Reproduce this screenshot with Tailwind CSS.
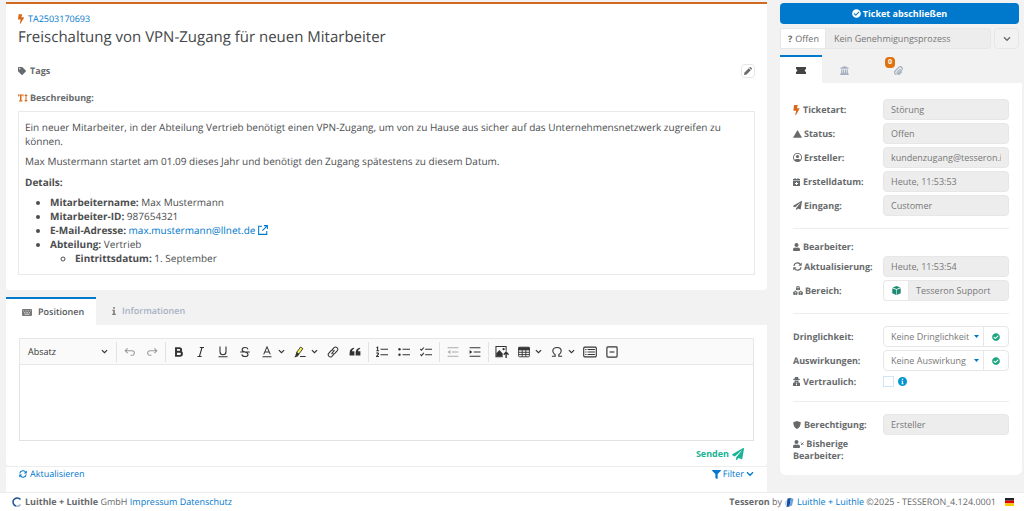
<!DOCTYPE html>
<html lang="de">
<head>
    <meta charset="UTF-8">
    <title>TA2503170693</title>
    <meta name="viewport" content="width=device-width, initial-scale=1.0">
    <script src="https://cdn.jsdelivr.net/npm/@tailwindcss/browser@4"></script>
</head>
<body class="bg-[#f2f2f2] font-['Open_Sans',sans-serif] [text-rendering:geometricPrecision] text-[9px] leading-3 text-[#676a6c] min-h-screen flex flex-col">

    <!-- Icons -->
    <svg class="hidden">
        <symbol id="bolt" viewBox="0 0 320 512"><path d="M296 160H180.6l42.6-129.8C227.2 15 215.7 0 200 0H56C44 0 33.8 8.9 32.2 20.8l-32 240C-1.7 275.2 9.5 288 24 288h118.7L96.6 482.5c-3.6 15.2 8 29.5 23.3 29.5 8.4 0 16.4-4.4 20.8-12l176-304c9.3-15.9-2.2-36-20.7-36z"/></symbol>
        <symbol id="check" viewBox="0 0 512 512"><path d="M504 256c0 136.967-111.033 248-248 248S8 392.967 8 256 119.033 8 256 8s248 111.033 248 248zM227.314 387.314l184-184c6.248-6.248 6.248-16.379 0-22.627l-22.627-22.627c-6.248-6.249-16.379-6.249-22.628 0L216 308.118l-70.059-70.059c-6.248-6.248-16.379-6.248-22.628 0l-22.627 22.627c-6.248 6.248-6.248 16.379 0 22.627l104 104c6.249 6.249 16.379 6.249 22.628.001z"/></symbol>
        <symbol id="tag" viewBox="0 0 512 512"><path d="M0 252.118V48C0 21.49 21.49 0 48 0h204.118a48 48 0 0 1 33.941 14.059l211.882 211.882c18.745 18.745 18.745 49.137 0 67.882L293.823 497.941c-18.745 18.745-49.137 18.745-67.882 0L14.059 286.059A48 48 0 0 1 0 252.118zM112 64c-26.51 0-48 21.49-48 48s21.49 48 48 48 48-21.49 48-48-21.49-48-48-48z"/></symbol>
        <symbol id="user" viewBox="0 0 448 512"><path d="M224 256c70.7 0 128-57.3 128-128S294.7 0 224 0 96 57.3 96 128s57.3 128 128 128zm89.6 32h-16.7c-22.2 10.2-46.9 16-72.9 16s-50.6-5.8-72.9-16h-16.7C60.2 288 0 348.2 0 422.4V464c0 26.5 21.5 48 48 48h352c26.5 0 48-21.5 48-48v-41.6c0-74.2-60.2-134.4-134.4-134.4z"/></symbol>
        <symbol id="plane" viewBox="0 0 512 512"><path d="M476 3.2L12.5 270.6c-18.1 10.4-15.8 35.6 2.2 43.2L121 358.4l287.3-253.2c5.5-4.9 13.3 2.6 8.6 8.3L176 407v80.5c0 23.6 28.5 32.9 42.5 15.8L282 426l124.6 52.2c14.2 6 30.4-2.9 33-18.2l72-432C515 7.8 493.3-6.8 476 3.2z"/></symbol>
        <symbol id="filter" viewBox="0 0 512 512"><path d="M487.976 0H24.028C2.71 0-8.047 25.866 7.058 40.971L192 225.941V432c0 7.831 3.821 15.17 10.237 19.662l80 55.98C298.02 518.69 320 507.493 320 487.98V225.941l184.947-184.97C520.021 25.896 509.338 0 487.976 0z"/></symbol>
        <symbol id="sync" viewBox="0 0 16 16"><g fill="none" stroke="currentColor" stroke-width="2.2"><path d="M1.6 7A6.4 6.4 0 0 1 13.5 4.8"/><path d="M14.4 9A6.4 6.4 0 0 1 2.5 11.2"/></g><path d="M15.5 0.8v6H9.6zM.5 15.2v-6h5.9z"/></symbol>
        <symbol id="bank" viewBox="0 0 16 16"><path d="M8 0l7.5 3.6V5H.5V3.6zM2 6h2.2v6H2zm3.3 0h2v6h-2zm3.4 0h2v6h-2zm3.1 0H14v6h-2.2zM1.3 12h13.4v2H1.3zM.3 14.200h15.400V16H.3z"/></symbol>
        <symbol id="caret" viewBox="0 0 12 8"><path d="M1.5 1.5L6 6l4.5-4.5" fill="none" stroke="currentColor" stroke-width="2"/></symbol>
        <symbol id="pencil" viewBox="0 0 16 16"><path d="M0 16l1-5L9.6 2.4l4 4L5 15zM10.6 1.5L12 .2c.5-.4 1-.2 1.4.1l2.3 2.3c.4.4.5 1 .1 1.4l-1.300 1.400z"/></symbol>
        <symbol id="cube" viewBox="0 0 16 16"><path d="M8 0l6.800 2.500L8 5.200 1.200 2.500zM.5 3.800l7 2.800V16L.5 13zM15.500 3.800l-7 2.800V16l7-3z"/></symbol>
    </svg>

    <main class="flex gap-[13px] pl-1.5 pr-0.5">

        <!-- Ticket -->
        <div class="flex-1 min-w-0 pt-0.5">
            <section class="bg-white border-t-2 border-[#d2691e] rounded-b px-3 pt-[9px] pb-[15px]">
                <a href="#" class="flex items-center gap-1 text-[#0078cc]">
                    <svg class="w-1.5 h-2.5 fill-[#d9691a]"><use href="#bolt"/></svg>TA2503170693
                </a>
                <h1 class="text-[15px] leading-6 text-[#444648]">Freischaltung von VPN-Zugang für neuen Mitarbeiter</h1>
                <div class="flex items-center justify-between mt-[15px] h-[14px]">
                    <span class="flex items-center gap-1 font-bold"><svg class="size-2 fill-current"><use href="#tag"/></svg>Tags</span>
                    <button aria-label="Tags bearbeiten" class="flex items-center justify-center size-[14px] border border-[#e7e7e7] rounded-sm"><svg class="size-2 fill-current"><use href="#pencil"/></svg></button>
                </div>
                <h2 class="flex items-center gap-0.5 mt-3.5 font-bold">
                    <svg class="w-2.5 h-2 fill-[#d9691a]" viewBox="0 0 20 16"><path d="M0 1h11v4H9.500V3H7v10h2v2H2v-2h2V3H1.500v2H0zM16 0l3.500 4H17v8h2.500L16 16l-3.500-4H15V4h-2.500z"/></svg>Beschreibung:
                </h2>
                <div class="border border-[#e9e9e9] mt-[7px] px-1.5 pt-2 pb-[9px] text-[10px] leading-[14px] text-[#4c4e50]">
                    <p>Ein neuer Mitarbeiter, in der Abteilung Vertrieb benötigt einen VPN-Zugang, um von zu Hause aus sicher auf das Unternehmensnetzwerk zugreifen zu können.</p>
                    <p class="mt-1.5">Max Mustermann startet am 01.09 dieses Jahr und benötigt den Zugang spätestens zu diesem Datum.</p>
                    <p class="mt-[7px]"><b>Details:</b></p>
                    <ul class="list-disc mt-1.5 pl-[25px]">
                        <li><b>Mitarbeitername:</b> Max Mustermann</li>
                        <li><b>Mitarbeiter-ID:</b> 987654321</li>
                        <li><b>E-Mail-Adresse:</b> <a href="#" class="text-[#0078cc]">max.mustermann@llnet.de <svg class="inline size-2.5 align-[-1px]" viewBox="0 0 16 16" fill="none" stroke="currentColor" stroke-width="1.700"><path d="M6.500 2H1v13h13V9.500M9.500 1H15v5.500M15 1L7 9"/></svg></a></li>
                        <li><b>Abteilung:</b> Vertrieb
                            <ul class="list-[circle] pl-[25px]">
                                <li><b>Eintrittsdatum:</b> 1. September</li>
                            </ul>
                        </li>
                    </ul>
                </div>
            </section>

            <nav class="flex mt-[7px] h-7">
                <a href="#" class="flex items-center gap-1.5 bg-white border-t-2 border-[#0078cc] pl-4 pr-3 font-semibold text-[#55585a]">
                    <svg class="w-2.5 h-[7px] fill-[#777]" viewBox="0 0 20 14"><path fill-rule="evenodd" d="M1.500 0h17L20 1.500v11L18.500 14h-17L0 12.500v-11zM2.500 3v1.500H4V3zm3.300 0v1.500h1.500V3zm3.400 0v1.500h1.500V3zm3.300 0v1.500H14V3zm3.500 0v1.500h1.500V3zm-12 3v1.500h1.500V6zm3.400 0v1.500h1.500V6zm3.300 0v1.500h1.500V6zm3.300 0v1.500h1.500V6zM5 9.500V11h10V9.500z"/></svg>Positionen
                </a>
                <a href="#" class="flex items-center gap-1.5 px-4 font-semibold text-[#a7b1c2]">
                    <svg class="w-1 h-2 fill-[#777]" viewBox="0 0 8 16"><path d="M2.500 0h3v3.500h-3zM.8 5.500h4.700v8H7.500V16H.5v-2.500h2V8H.8z"/></svg>Informationen
                </a>
            </nav>
            <section class="bg-white border-b border-[#ededed] rounded-b px-[13px] pt-[13px] pb-1.5">
                <div class="flex items-center h-[27px] bg-[#fafafa] border border-[#e7e7e7] text-[#333] overflow-hidden">
                    <button class="flex items-center justify-between w-[96px] pl-2 pr-2">Absatz<svg class="w-[7px] h-[5px]"><use href="#caret"/></svg></button>
                    <span class="w-px h-5 bg-[#e2e2e2] mr-0.5"></span>
                    <button aria-label="Rückgängig" class="w-[22px] flex justify-center text-[#999]"><svg class="size-3" viewBox="0 0 20 20" fill="none" stroke="currentColor" stroke-width="1.800"><path d="M6 4L2 8l4 4M2 8h11.500a3.700 3.700 0 0 1 0 7.500H11"/></svg></button>
                    <button aria-label="Wiederherstellen" class="w-[22px] flex justify-center text-[#999]"><svg class="size-3" viewBox="0 0 20 20" fill="none" stroke="currentColor" stroke-width="1.800"><path d="M14 4l4 4-4 4M18 8H6.500a3.700 3.700 0 0 0 0 7.500H9"/></svg></button>
                    <span class="w-px h-5 bg-[#e2e2e2] mx-0.5"></span>
                    <button aria-label="Fett" class="w-[22px] flex justify-center"><svg class="size-3" viewBox="0 0 20 20" fill="none" stroke="currentColor" stroke-width="3.200"><path d="M5 3.500h5.500a3 3 0 0 1 0 6.200H5zM5 9.700h6.500a3.400 3.400 0 0 1 0 6.800H5z"/></svg></button>
                    <button aria-label="Kursiv" class="w-[22px] flex justify-center"><svg class="size-3" viewBox="0 0 20 20" fill="none" stroke="currentColor" stroke-width="1.800"><path d="M8 2.500h7M4 17.500h7M11.700 2.500L7.300 17.500"/></svg></button>
                    <button aria-label="Unterstrichen" class="w-[22px] flex justify-center"><svg class="size-3" viewBox="0 0 20 20" fill="none" stroke="currentColor" stroke-width="1.800"><path d="M5 1v8.500a5 5 0 0 0 10 0V1M2.500 18h15"/></svg></button>
                    <button aria-label="Durchgestrichen" class="w-[22px] flex justify-center"><svg class="size-3" viewBox="0 0 20 20" fill="none" stroke="currentColor" stroke-width="1.800"><path d="M15 5.500C14.500 3.500 12.500 2.500 10 2.500c-3 0-4.800 1.500-4.800 3.700 0 2 1.800 3 4.800 3.800 3.500.9 5 1.900 5 4 0 2.300-2 3.500-5 3.500s-5-1.300-5.300-3.500M2 10h16"/></svg></button>
                    <button aria-label="Schriftfarbe" class="w-[33px] flex items-center pl-[5px] gap-[5px]"><svg class="size-3" viewBox="0 0 20 20" fill="none" stroke="currentColor" stroke-width="1.700"><path d="M4.500 14L10 1.500 15.500 14M6.500 10h7M2.500 18h15"/></svg><svg class="w-[7px] h-[5px]"><use href="#caret"/></svg></button>
                    <button aria-label="Hervorheben" class="w-[33px] flex items-center pl-[5px] gap-[5px]"><svg class="size-3" viewBox="0 0 20 20"><path d="M4.500 10.500L11 1.700l3.800 2.800-6.500 8.800z" fill="#fdf253" stroke="#333" stroke-width="1.500"/><path d="M4 10l5 3.700-3 3.800-5.500 1.500 2-3.500zM10 16.800h9.500v1.700H10z" fill="#333"/></svg><svg class="w-[7px] h-[5px]"><use href="#caret"/></svg></button>
                    <button aria-label="Link" class="w-[22px] flex justify-center"><svg class="size-3" viewBox="0 0 20 20" fill="none" stroke="currentColor" stroke-width="1.700"><path d="M8.500 6.500l3.200-3.700a3.700 3.700 0 0 1 5.500 4.900l-3.700 4.300a3.700 3.700 0 0 1-4 1M11.500 13.500l-3.200 3.700a3.700 3.700 0 0 1-5.500-4.900L6.500 8a3.700 3.700 0 0 1 4-1M7.500 13l5-6"/></svg></button>
                    <button aria-label="Zitat" class="w-[22px] flex justify-center"><svg class="size-3 fill-current" viewBox="0 0 20 20"><path d="M8.500 3C4 3.500 1 6.500 1 11.500V16h8V8.800H5c.3-2 1.500-3.500 3.500-4.300zM18.500 3C14 3.500 11 6.500 11 11.500V16h8V8.800h-4c.3-2 1.500-3.500 3.500-4.300z"/></svg></button>
                    <span class="w-px h-5 bg-[#e2e2e2] mx-0.5"></span>
                    <button aria-label="Nummerierte Liste" class="w-[22px] flex justify-center"><svg class="size-3" viewBox="0 0 20 20" fill="none" stroke="currentColor" stroke-width="1.800"><path d="M7.500 5.500H20M7.500 14.500H20M.8 3L2.700 2v6M.5 8h4.500M.7 12.300c1-1.200 3.700-1 3.500.5C4 14.500 1.500 16 .8 17.500H5"/></svg></button>
                    <button aria-label="Aufzählung" class="w-[22px] flex justify-center"><svg class="size-3" viewBox="0 0 20 20" fill="none" stroke="currentColor" stroke-width="1.800"><path d="M7.500 5.500H20M7.500 14.500H20"/><g fill="currentColor" stroke="none"><circle cx="2.500" cy="5.500" r="2"/><circle cx="2.500" cy="14.500" r="2"/></g></svg></button>
                    <button aria-label="Aufgabenliste" class="w-[22px] flex justify-center"><svg class="size-3" viewBox="0 0 20 20" fill="none" stroke="currentColor" stroke-width="1.800"><path d="M8.500 5.500H20M8.500 14.500H20M.5 5l2 2 4-4.500M.5 14l2 2 4-4.500"/></svg></button>
                    <span class="w-px h-5 bg-[#e2e2e2] mx-0.5"></span>
                    <button aria-label="Einzug verkleinern" class="w-[22px] flex justify-center text-[#aaa]"><svg class="size-3" viewBox="0 0 20 20" fill="none" stroke="currentColor" stroke-width="1.800"><path d="M1 3h18M8 10h11M1 17h18"/><path d="M5.500 6.500v7L1 10z" fill="currentColor" stroke="none"/></svg></button>
                    <button aria-label="Einzug vergrößern" class="w-[22px] flex justify-center"><svg class="size-3" viewBox="0 0 20 20" fill="none" stroke="currentColor" stroke-width="1.800"><path d="M1 3h18M8 10h11M1 17h18"/><path d="M1 6.500v7L5.500 10z" fill="currentColor" stroke="none"/></svg></button>
                    <span class="w-px h-5 bg-[#e2e2e2] mx-0.5"></span>
                    <button aria-label="Bild einfügen" class="w-[22px] flex justify-center"><svg class="size-[14px]" viewBox="0 0 22 20" fill="none" stroke="currentColor" stroke-width="1.600"><path d="M12 17.500H1.500v-16h16V8"/><path d="M2 17v-5l5-5 5 5.500V17z" fill="currentColor" stroke="none"/><circle cx="13.500" cy="5.500" r="1.800" fill="currentColor" stroke="none"/><path d="M17.500 19.500v-8M13.700 14.200l3.800-4 3.800 4" stroke-width="2.200"/></svg></button>
                    <button aria-label="Tabelle einfügen" class="w-[33px] flex items-center pl-[5px] gap-[5px]"><svg class="size-3" viewBox="0 0 20 20" fill="none" stroke="currentColor" stroke-width="1.500"><rect x="1" y="2" width="18" height="16" rx="1.500"/><path d="M1 3h18v3.500H1z" fill="currentColor"/><path d="M1 10.500h18M1 14.300h18M7 6v12M13 6v12"/></svg><svg class="w-[7px] h-[5px]"><use href="#caret"/></svg></button>
                    <button aria-label="Sonderzeichen" class="w-[33px] flex items-center pl-[5px] gap-[5px]"><svg class="size-3" viewBox="0 0 20 20" fill="none" stroke="currentColor" stroke-width="1.800"><path d="M1.500 17H7v-2.500C4.500 13 3 11 3 8.500 3 5 6 2.500 10 2.500s7 2.500 7 6c0 2.500-1.500 4.500-4 6V17h5.500"/></svg><svg class="w-[7px] h-[5px]"><use href="#caret"/></svg></button>
                    <button aria-label="Textbaustein" class="w-[22px] flex justify-center"><svg class="size-[14px]" viewBox="0 0 20 20" fill="none" stroke="currentColor" stroke-width="1.600"><rect x="1" y="3" width="18" height="14" rx="1.500"/><path d="M6.500 6.500H17M6.500 10H17M6.500 13.500H17M3.200 6.500H5M3.200 10H5M3.200 13.500H5" stroke-width="1.500"/></svg></button>
                    <button aria-label="Einklappen" class="w-[22px] flex justify-center"><svg class="size-3" viewBox="0 0 20 20" fill="none" stroke="currentColor" stroke-width="1.900"><rect x="1.500" y="1.500" width="17" height="17" rx="1.500"/><path d="M6 10h8"/></svg></button>
                </div>
                <textarea aria-label="Nachricht" class="block w-full h-[76px] border border-t-0 border-[#e2e2e2] resize-none p-2 outline-none"></textarea>
                <button class="flex items-center gap-[3px] ml-auto mr-2.5 mt-[7px] font-bold text-[#1ab394]">Senden<svg class="size-3 fill-current"><use href="#plane"/></svg></button>
            </section>
            <section class="flex justify-between bg-white px-[13px] pt-px pb-3 text-[#0078cc]">
                <a href="#" class="flex items-center gap-[3px]"><svg class="size-2 fill-current"><use href="#sync"/></svg>Aktualisieren</a>
                <a href="#" class="flex items-center gap-0.5"><svg class="size-[9px] fill-current"><use href="#filter"/></svg>Filter<svg class="w-2 h-1.5"><use href="#caret"/></svg></a>
            </section>
        </div>

        <!-- Details -->
        <aside class="w-[242px] shrink-0 pt-[3px]">
            <button class="flex items-center justify-center gap-0.5 w-[239px] h-[21px] bg-[#0078cc] rounded-sm text-white font-bold"><svg class="size-[9px] fill-current"><use href="#check"/></svg>Ticket abschließen</button>
            <div class="flex w-[239px] h-[21px] mt-1">
                <span class="flex items-center gap-[3px] w-[46px] pl-[7px] bg-white border border-[#e7e7e7]"><b>?</b>Offen</span>
                <input aria-label="Genehmigungsprozess" readonly value="Kein Genehmigungsprozess" class="flex-1 min-w-0 bg-[#ededed] border border-l-0 border-[#e7e7e7] rounded-r-sm px-2 text-[#777]">
                <button aria-label="Mehr" class="flex items-center justify-center w-[25px] ml-[3px] border border-[#e7e7e7] rounded-sm"><svg class="w-2 h-1.5"><use href="#caret"/></svg></button>
            </div>
            <nav class="flex h-7 mt-1.5">
                <a href="#" aria-label="Ticket" class="flex items-center justify-center w-[42px] bg-white border-t-2 border-[#0078cc]"><svg class="w-2.5 h-[7px] fill-[#444]" viewBox="0 0 20 14"><path d="M0 0h20v4.500a2.500 2.500 0 0 0 0 5V14H0V9.500a2.500 2.500 0 0 0 0-5z"/></svg></a>
                <a href="#" aria-label="Organisation" class="flex items-center justify-center w-[44px] pt-0.5"><svg class="size-[9px] fill-[#a7b1c2]"><use href="#bank"/></svg></a>
                <a href="#" aria-label="Anhänge" class="relative flex items-center justify-center w-16 pt-0.5">
                    <svg class="size-[9px]" viewBox="0 0 16 16" fill="none" stroke="#a7b1c2" stroke-width="2.200"><path d="M11.500 5L5.800 10.800a1.400 1.400 0 0 0 2 2l6-6a3.400 3.400 0 0 0-4.800-4.800l-6.500 6.500a4.600 4.600 0 0 0 6.500 6.500l5-5"/></svg>
                    <span class="absolute left-[19px] top-0.5 px-[3px] h-[11px] leading-[11px] bg-[#e0720f] rounded-sm text-white text-[7px] font-bold">0</span>
                </a>
            </nav>
            <section class="bg-white rounded-b-md px-[13px] pt-4 pb-[13px] font-bold">
                <div class="grid grid-cols-[90px_126px] gap-y-[3px] items-center">
                    <label for="art" class="flex items-center gap-[3px]"><svg class="w-[7px] h-2.5 fill-[#d9691a]"><use href="#bolt"/></svg>Ticketart:</label>
                    <input id="art" readonly value="Störung" class="w-full h-[21px] bg-[#ededed] border border-[#e7e7e7] rounded-sm px-[7px] font-normal text-[#777]">
                    <label for="status" class="flex items-center gap-0.5"><svg class="w-[9px] h-2 fill-current" viewBox="0 0 18 16"><path d="M9 0l9 15.500H0z"/></svg>Status:</label>
                    <input id="status" readonly value="Offen" class="w-full h-[21px] bg-[#ededed] border border-[#e7e7e7] rounded-sm px-[7px] font-normal text-[#777]">
                    <label for="ersteller" class="flex items-center gap-0.5"><svg class="size-[9px] fill-current" viewBox="0 0 16 16"><path fill-rule="evenodd" d="M8 0a8 8 0 1 1 0 16A8 8 0 0 1 8 0zm0 1.500A6.500 6.500 0 0 0 3.400 12.600C4 11 5 10.500 6 10.500h4c1 0 2 .5 2.600 2.100A6.500 6.500 0 0 0 8 1.500z"/><circle cx="8" cy="6.300" r="2.800"/></svg>Ersteller:</label>
                    <input id="ersteller" readonly value="kundenzugang@tesseron.io" class="w-full h-[21px] bg-[#ededed] border border-[#e7e7e7] rounded-sm px-[7px] font-normal text-[#777]">
                    <label for="datum" class="flex items-center gap-[3px]"><svg class="w-[7px] h-2 fill-current" viewBox="0 0 14 16"><path fill-rule="evenodd" d="M3 0h2v2h4V0h2v2h3v3H0V2h3zM0 6h14v10H0zm6 1.800v2.200H3.800v2H6v2.200h2V12h2.200v-2H8V7.800z"/></svg>Erstelldatum:</label>
                    <input id="datum" readonly value="Heute, 11:53:53" class="w-full h-[21px] bg-[#ededed] border border-[#e7e7e7] rounded-sm px-[7px] font-normal text-[#777]">
                    <label for="eingang" class="flex items-center gap-0.5"><svg class="size-[9px] fill-current"><use href="#plane"/></svg>Eingang:</label>
                    <input id="eingang" readonly value="Customer" class="w-full h-[21px] bg-[#ededed] border border-[#e7e7e7] rounded-sm px-[7px] font-normal text-[#777]">
                </div>
                <hr class="border-[#ededed] mt-3 mb-3">
                <div class="grid grid-cols-[90px_126px] gap-y-[3px] items-center">
                    <span class="col-span-2 flex items-center gap-[3px]"><svg class="w-[7px] h-2 fill-current"><use href="#user"/></svg>Bearbeiter:</span>
                    <label for="aktual" class="flex items-center gap-0.5"><svg class="size-[9px] fill-current"><use href="#sync"/></svg>Aktualisierung:</label>
                    <input id="aktual" readonly value="Heute, 11:53:54" class="w-full h-[21px] bg-[#ededed] border border-[#e7e7e7] rounded-sm px-[7px] font-normal text-[#777]">
                    <label for="bereich" class="flex items-center gap-0.5"><svg class="size-2.5 fill-current" viewBox="0 0 22 22"><use href="#cube" x="6" y="0" width="10" height="10"/><use href="#cube" x="0" y="10" width="10.500" height="10.500"/><use href="#cube" x="11.500" y="10" width="10.500" height="10.500"/></svg>Bereich:</label>
                    <div class="flex h-[21px]">
                        <span class="flex items-center justify-center w-[25px] border border-r-0 border-[#e7e7e7] rounded-l-sm"><svg class="size-[9px] fill-[#1a8a72]"><use href="#cube"/></svg></span>
                        <input id="bereich" readonly value="Tesseron Support" class="flex-1 min-w-0 bg-[#ededed] border border-[#e7e7e7] rounded-r-sm px-[7px] font-normal text-[#777]">
                    </div>
                </div>
                <hr class="border-[#ededed] mt-3 mb-3">
                <div class="grid grid-cols-[90px_126px] gap-y-[3px] items-center">
                    <label for="dring">Dringlichkeit:</label>
                    <div class="relative flex h-[21px] border border-[#e7e7e7] rounded-sm">
                        <select id="dring" class="appearance-none flex-1 min-w-0 pl-[7px] font-normal text-[#777]"><option>Keine Dringlichkeit</option></select>
                        <svg class="absolute right-[29px] top-2 w-[5px] h-[3px] fill-[#0078cc]" viewBox="0 0 10 6"><path d="M0 0h10L5 6z"/></svg>
                        <span class="flex items-center justify-center w-[25px] border-l border-[#e7e7e7]"><svg class="size-2 fill-[#1aa67e]"><use href="#check"/></svg></span>
                    </div>
                    <label for="ausw">Auswirkungen:</label>
                    <div class="relative flex h-[21px] border border-[#e7e7e7] rounded-sm">
                        <select id="ausw" class="appearance-none flex-1 min-w-0 pl-[7px] font-normal text-[#777]"><option>Keine Auswirkung</option></select>
                        <svg class="absolute right-[29px] top-2 w-[5px] h-[3px] fill-[#0078cc]" viewBox="0 0 10 6"><path d="M0 0h10L5 6z"/></svg>
                        <span class="flex items-center justify-center w-[25px] border-l border-[#e7e7e7]"><svg class="size-2 fill-[#1aa67e]"><use href="#check"/></svg></span>
                    </div>
                    <label for="vertr" class="flex items-center gap-[3px] h-[15px]"><svg class="w-[7px] h-[9px] fill-current" viewBox="0 0 14 18"><path fill-rule="evenodd" d="M4 0h6l1.500 4.500H14V6H0V4.500h2.500zM3 7h8v2a2 2 0 0 1-4 .5A2 2 0 0 1 3 9zM2 10.500l5 1.500 5-1.500 2 2V18H0v-5.500zM6 13v3.500h2V13z"/></svg>Vertraulich:</label>
                    <div class="flex items-center gap-1">
                        <input id="vertr" type="checkbox" class="appearance-none size-[11px] bg-white border border-[#cfe6f8]">
                        <svg class="size-[9px] fill-[#0096d2]" viewBox="0 0 16 16"><path fill-rule="evenodd" d="M8 0a8 8 0 1 1 0 16A8 8 0 0 1 8 0zM6.800 3v2.400h2.400V3zM6 6.500V8h1v3.500H6V13h4v-1.500H9v-5z"/></svg>
                    </div>
                </div>
                <hr class="border-[#ededed] mt-3 mb-3">
                <div class="grid grid-cols-[90px_126px] gap-y-[3px] items-center">
                    <label for="recht" class="flex items-center gap-[3px]"><svg class="size-2 fill-current" viewBox="0 0 16 16"><path d="M8 0l7.500 2.500C15.500 9 13 14 8 16 3 14 .5 9 .5 2.500z"/></svg>Berechtigung:</label>
                    <input id="recht" readonly value="Ersteller" class="w-full h-[21px] bg-[#ededed] border border-[#e7e7e7] rounded-sm px-[7px] font-normal text-[#777]">
                    <span><svg class="inline w-[11px] h-2 fill-current align-[-1px]" viewBox="0 0 22 16"><use href="#user" width="14" height="16"/><path d="M16 5l5 5M21 5L16 10" stroke="currentColor" stroke-width="1.800"/></svg> Bisherige Bearbeiter:</span>
                </div>
            </section>
        </aside>
    </main>

    <footer class="flex items-center justify-between mt-auto h-[19px] bg-white border-t border-[#ededed] pl-3 pr-2.5">
        <div class="flex items-center gap-[3px]">
            <svg class="size-[10px]" viewBox="0 0 20 20" fill="none" stroke-width="3"><path d="M17 5A8.300 8.300 0 1 0 8 18" stroke="#1d4f91"/><path d="M8 18a8 8 0 0 0 9-3" stroke="#9db4d3"/></svg>
            <span><b>Luithle + Luithle</b> GmbH <a href="#" class="text-[#0078cc]">Impressum</a> <a href="#" class="text-[#0078cc]">Datenschutz</a></span>
        </div>
        <div class="flex items-center gap-[3px]">
            <span><b>Tesseron</b> by</span>
            <svg class="size-[9px]" viewBox="0 0 18 18"><path d="M5 1l7-1-3 17-6 1z" fill="#174f9c"/><path d="M12 0l5 2-3 13-5 2z" fill="#6fa3dc"/><path d="M1 6l3-2-2 11-2-2z" fill="#a9c6e8"/></svg>
            <span><a href="#" class="text-[#0078cc]">Luithle + Luithle</a> ©2025 - TESSERON_4.124.0001</span>
            <svg class="w-[9px] h-2 ml-1.5" viewBox="0 0 9 9" preserveAspectRatio="none"><path d="M0 0h9v3H0z" fill="#222"/><path d="M0 3h9v3H0z" fill="#d00"/><path d="M0 6h9v3H0z" fill="#fc0"/></svg>
        </div>
    </footer>

</body>
</html>
